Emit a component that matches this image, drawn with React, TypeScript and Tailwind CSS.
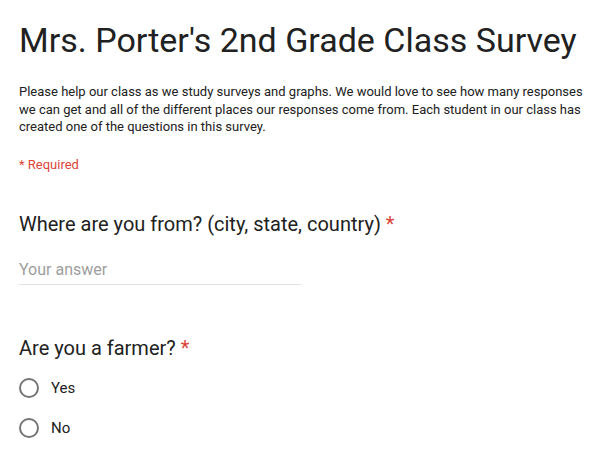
export default function App() {
  return (
    <div
      className="min-h-[476px] w-[612px] bg-white text-[#212121]"
      style={{ fontFamily: "Roboto, 'Liberation Sans', sans-serif" }}
    >
      <div className="px-[19px] pt-[18px]">
        <h1 className="text-[34px] leading-[44px]">Mrs. Porter's 2nd Grade Class Survey</h1>
        <p className="mt-[21px] text-[13px] leading-[17.5px]">
          Please help our class as we study surveys and graphs. We would love to see how many responses we can get
          and all of the different places our responses come from. Each student in our class has created one of the
          questions in this survey.
        </p>
        <div className="mt-[19px] text-[13px] leading-[19.5px] text-[#db4437]">* Required</div>

        {/* Question 1 */}
        <div className="mt-[37px]">
          <div className="text-[20px] leading-[26px]">
            Where are you from? (city, state, country) <span className="text-[#db4437]">*</span>
          </div>
          <div className="mt-[21px] w-[282px] border-b border-[#e0e0e0] pb-[2px] text-[16px] leading-[24px] text-[#9e9e9e]">
            Your answer
          </div>
        </div>

        {/* Question 2 */}
        <div className="mt-[50px]">
          <div className="text-[20px] leading-[26px]">
            Are you a farmer? <span className="text-[#db4437]">*</span>
          </div>
          <div className="mt-[17px] flex flex-col gap-[20px]">
            {["Yes", "No"].map((opt) => (
              <label key={opt} className="flex h-[20px] items-center gap-[12px] text-[15px]">
                <span className="h-[20px] w-[20px] rounded-full border-2 border-[#757575]" />
                {opt}
              </label>
            ))}
          </div>
        </div>
      </div>
    </div>
  );
}
